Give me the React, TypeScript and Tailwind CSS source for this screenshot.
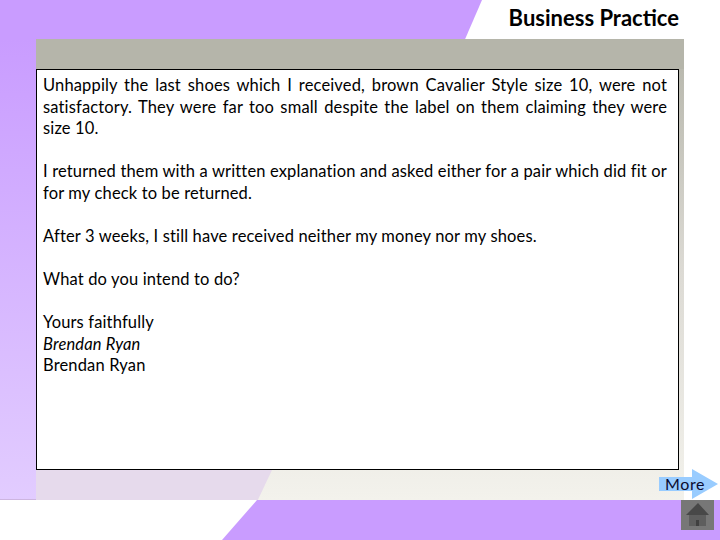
function HomeIcon() {
  return (
    <svg width="33" height="30" viewBox="0 0 33 30" className="block">
      <rect width="33" height="30" fill="#777777" />
      <path d="M17 3 L28 15 H5 Z" fill="#484848" />
      <path d="M8 15 H25 V26 H8 Z" fill="#5e5e5e" />
      <rect x="15" y="20" width="3" height="6" fill="#404040" />
    </svg>
  );
}

function MoreArrow() {
  return (
    <div className="absolute left-[659px] top-[469px] w-[60px] h-[30px]">
      <svg width="60" height="30" viewBox="0 0 60 30" className="block">
        <path d="M0 8 H33 V0 L59 15 L33 30 V22 H0 Z" fill="#99ccff" />
      </svg>
      <span className="absolute left-[6px] top-[4px] text-[16px] leading-[22px] tracking-[0.6px] text-[#0a0a30]">More</span>
    </div>
  );
}

export default function App() {
  return (
    <div className="relative w-[720px] h-[540px] overflow-hidden bg-white flex flex-col font-['Lato','Open_Sans',sans-serif]">
      <div className="h-[39px] flex shrink-0">
        <div className="w-[482px] bg-[#c99cff] [clip-path:polygon(0_0,100%_0,96.5%_100%,0_100%)]" />
        <h1 className="w-[197px] text-right text-[22px] leading-[36px] font-bold text-black">Business Practice</h1>
      </div>

      <div className="h-[461px] flex shrink-0">
        <div className="w-[36px] bg-gradient-to-b from-[#c99cff] to-[#e2ccff] border-b border-[#cdb5e0]" />
        <div className="w-[648px] flex flex-col bg-gradient-to-b from-[#b5b5aa] via-[#dcdad4] to-[#f3f2ec]">
          <div className="h-[30px] shrink-0 bg-[#b5b5aa]" />
          <div className="w-[643px] h-[401px] shrink-0 bg-white border border-black pl-[6px] pr-[11px] pt-[5px] text-[16.5px] leading-[21.5px] tracking-[0.15px] text-black">
            <p className="text-justify">Unhappily the last shoes which I received, brown Cavalier Style size 10, were not satisfactory. They were far too small despite the label on them claiming they were size 10.</p>
            <p className="mt-[21.5px] text-justify">I returned them with a written explanation and asked either for a pair which did fit or for my check to be returned.</p>
            <p className="mt-[21.5px]">After 3 weeks, I still have received neither my money nor my shoes.</p>
            <p className="mt-[21.5px]">What do you intend to do?</p>
            <p className="mt-[22px]">Yours faithfully</p>
            <p className="italic">Brendan Ryan</p>
            <p>Brendan Ryan</p>
          </div>
          <div className="flex-1 flex">
            <div className="w-[236px] bg-[#e6daec] [clip-path:polygon(0_0,100%_0,94%_100%,0_100%)]" />
            <div className="flex-1" />
          </div>
        </div>
      </div>

      <div className="h-[40px] flex shrink-0">
        <div className="w-[222px]" />
        <div className="w-[498px] bg-[#c99cff] [clip-path:polygon(35px_0,100%_0,100%_100%,0_100%)] flex justify-end pr-[6px]">
          <HomeIcon />
        </div>
      </div>

      <MoreArrow />
    </div>
  );
}
